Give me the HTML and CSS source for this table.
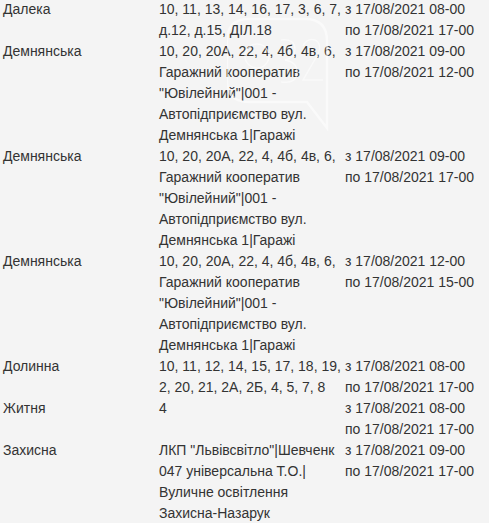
FILE: index.html
```html
<!DOCTYPE html>
<html lang="uk">
<head>
<meta charset="utf-8">
<link rel="stylesheet" href="styles.css">
</head>
<body>
<div class="page">
  <table class="outages">
    <colgroup><col class="c-street"><col class="c-houses"><col class="c-time"></colgroup>
    <tbody>
      <tr><td>Далека</td><td>10, 11, 13, 14, 16, 17, 3, 6, 7, д.12, д.15, ДІЛ.18</td><td>з 17/08/2021 08-00<br>по 17/08/2021 17-00</td></tr>
      <tr><td>Демнянська</td><td>10, 20, 20А, 22, 4, 4б, 4в, 6, Гаражний кооператив "Ювілейний"|001 - Автопідприємство вул. Демнянська 1|Гаражі</td><td>з 17/08/2021 09-00<br>по 17/08/2021 12-00</td></tr>
      <tr><td>Демнянська</td><td>10, 20, 20А, 22, 4, 4б, 4в, 6, Гаражний кооператив "Ювілейний"|001 - Автопідприємство вул. Демнянська 1|Гаражі</td><td>з 17/08/2021 09-00<br>по 17/08/2021 17-00</td></tr>
      <tr><td>Демнянська</td><td>10, 20, 20А, 22, 4, 4б, 4в, 6, Гаражний кооператив "Ювілейний"|001 - Автопідприємство вул. Демнянська 1|Гаражі</td><td>з 17/08/2021 12-00<br>по 17/08/2021 15-00</td></tr>
      <tr><td>Долинна</td><td>10, 11, 12, 14, 15, 17, 18, 19, 2, 20, 21, 2А, 2Б, 4, 5, 7, 8</td><td>з 17/08/2021 08-00<br>по 17/08/2021 17-00</td></tr>
      <tr><td>Житня</td><td>4</td><td>з 17/08/2021 08-00<br>по 17/08/2021 17-00</td></tr>
      <tr><td>Захисна</td><td>ЛКП "Львівсвітло"|Шевченк<br>047 універсальна Т.О.|Вуличне освітлення Захисна-Назарук</td><td>з 17/08/2021 09-00<br>по 17/08/2021 17-00</td></tr>
    </tbody>
  </table>
  <svg class="watermark" width="260" height="120" viewBox="0 0 260 120" aria-hidden="true">
    <path d="M22 3 H78 Q100 3 100 25 V112 L80 86 H22 Q0 86 0 64 V25 Q0 3 22 3 Z" fill="none" stroke="#ffffff" stroke-width="2.5"/>
    <circle cx="30" cy="40" r="12" fill="none" stroke="#ffffff" stroke-width="1.5"/>
    <path d="M54 24 Q68 22 68 34 Q68 42 58 44 Q70 46 70 56 Q70 68 54 66" fill="none" stroke="#ffffff" stroke-width="1.5"/>
    <path d="M76 30 Q80 22 88 24 Q96 28 90 40 L76 64 H96" fill="none" stroke="#ffffff" stroke-width="1.5"/>
  </svg>
</div>
</body>
</html>
```

FILE: styles.css
```css
html, body {
  margin: 0;
  padding: 0;
  background: #f4f4f4;
}

body {
  font-family: "Liberation Sans", Arial, sans-serif;
  font-size: 14px;
  line-height: 21px;
  color: #333333;
}

.page {
  position: relative;
  height: 523px;
  overflow: hidden;
}

.outages {
  border-collapse: collapse;
  table-layout: fixed;
  width: 489px;
  margin-top: -1px;
}

.c-street { width: 156px; }
.c-houses { width: 186px; }
.c-time { width: 147px; }

.outages td {
  vertical-align: top;
  padding: 0 0 0 3px;
}

.outages td:nth-child(3) {
  white-space: nowrap;
}

.watermark {
  position: absolute;
  left: 227px;
  top: 16px;
  opacity: 0.55;
  pointer-events: none;
}
```
